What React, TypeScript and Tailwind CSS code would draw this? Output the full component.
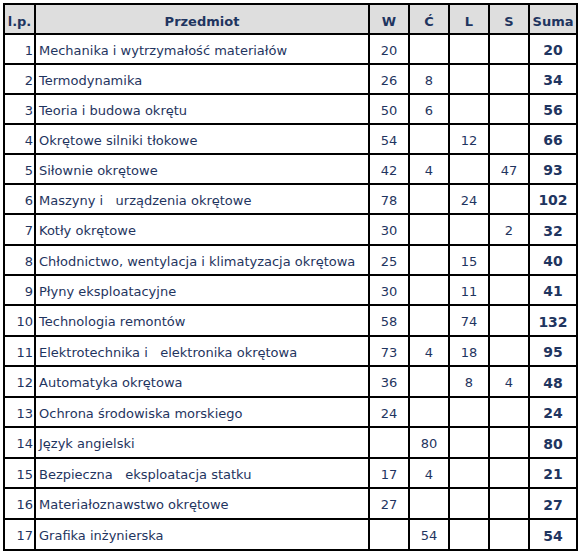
import React from 'react';

type Row = [number, string, string, string, string, string, string];

const rows: Row[] = [
  [1, 'Mechanika i wytrzymałość materiałów', '20', '', '', '', '20'],
  [2, 'Termodynamika', '26', '8', '', '', '34'],
  [3, 'Teoria i budowa okrętu', '50', '6', '', '', '56'],
  [4, 'Okrętowe silniki tłokowe', '54', '', '12', '', '66'],
  [5, 'Siłownie okrętowe', '42', '4', '', '47', '93'],
  [6, 'Maszyny i   urządzenia okrętowe', '78', '', '24', '', '102'],
  [7, 'Kotły okrętowe', '30', '', '', '2', '32'],
  [8, 'Chłodnictwo, wentylacja i klimatyzacja okrętowa', '25', '', '15', '', '40'],
  [9, 'Płyny eksploatacyjne', '30', '', '11', '', '41'],
  [10, 'Technologia remontów', '58', '', '74', '', '132'],
  [11, 'Elektrotechnika i   elektronika okrętowa', '73', '4', '18', '', '95'],
  [12, 'Automatyka okrętowa', '36', '', '8', '4', '48'],
  [13, 'Ochrona środowiska morskiego', '24', '', '', '', '24'],
  [14, 'Język angielski', '', '80', '', '', '80'],
  [15, 'Bezpieczna   eksploatacja statku', '17', '4', '', '', '21'],
  [16, 'Materiałoznawstwo okrętowe', '27', '', '', '', '27'],
  [17, 'Grafika inżynierska', '', '54', '', '', '54'],
];

const cell = 'bg-white flex items-center pt-[3px]';
const head = 'bg-[#dedede] flex items-center justify-center pt-[5px] font-bold';

export default function App() {
  return (
    <div className="w-[583px] h-[556px] bg-white pt-[3px] pl-[3px] text-[13px] text-[#1f3560] font-['DejaVu_Sans',sans-serif]">
      <div className="inline-grid bg-black p-[2px] gap-[2px] grid-cols-[29px_332px_38px_38px_38px_38px_46px] grid-rows-[28px_28px_28px_28px_28px_28px_28px_29px_28px_28px_29px_28px_29px_28px_29px_28px_29px_29px]">
        <div className={head}>l.p.</div>
        <div className={head}>Przedmiot</div>
        <div className={head}>W</div>
        <div className={head}>Ć</div>
        <div className={head}>L</div>
        <div className={head}>S</div>
        <div className={head}>Suma</div>
        {rows.map((r) => (
          <React.Fragment key={r[0]}>
            <div className={`${cell} justify-end pr-[1px]`}>{r[0]}</div>
            <div className={`${cell} pl-[3px] whitespace-pre`}>{r[1]}</div>
            <div className={`${cell} justify-center`}>{r[2]}</div>
            <div className={`${cell} justify-center`}>{r[3]}</div>
            <div className={`${cell} justify-center`}>{r[4]}</div>
            <div className={`${cell} justify-center`}>{r[5]}</div>
            <div className={`${cell} justify-center font-bold text-[14px]`}>{r[6]}</div>
          </React.Fragment>
        ))}
      </div>
    </div>
  );
}
